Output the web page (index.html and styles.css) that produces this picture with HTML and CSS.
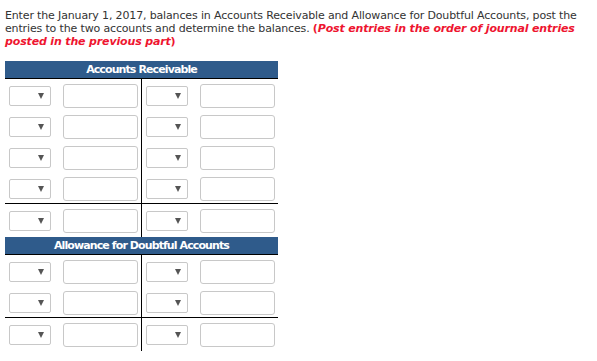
FILE: index.html
```html
<!DOCTYPE html>
<html>
<head>
<meta charset="utf-8">
<link rel="stylesheet" href="styles.css">
</head>
<body>
<p class="intro">Enter the January 1, 2017, balances in Accounts Receivable and Allowance for Doubtful Accounts, post the entries to the two accounts and determine the balances. <span class="note">(<em>Post entries in the order of journal entries posted in the previous part</em>)</span></p>

<div class="taccount">
  <div class="t-head">Accounts Receivable</div>
  <div class="t-row"><div class="cell left"><div class="sel"><span class="caret"></span></div><input class="amt" type="text"></div><div class="cell right"><div class="sel"><span class="caret"></span></div><input class="amt" type="text"></div></div>
  <div class="t-row"><div class="cell left"><div class="sel"><span class="caret"></span></div><input class="amt" type="text"></div><div class="cell right"><div class="sel"><span class="caret"></span></div><input class="amt" type="text"></div></div>
  <div class="t-row"><div class="cell left"><div class="sel"><span class="caret"></span></div><input class="amt" type="text"></div><div class="cell right"><div class="sel"><span class="caret"></span></div><input class="amt" type="text"></div></div>
  <div class="t-row"><div class="cell left"><div class="sel"><span class="caret"></span></div><input class="amt" type="text"></div><div class="cell right"><div class="sel"><span class="caret"></span></div><input class="amt" type="text"></div></div>
  <div class="t-row total"><div class="cell left"><div class="sel"><span class="caret"></span></div><input class="amt" type="text"></div><div class="cell right"><div class="sel"><span class="caret"></span></div><input class="amt" type="text"></div></div>
</div>

<div class="taccount">
  <div class="t-head">Allowance for Doubtful Accounts</div>
  <div class="t-row"><div class="cell left"><div class="sel"><span class="caret"></span></div><input class="amt" type="text"></div><div class="cell right"><div class="sel"><span class="caret"></span></div><input class="amt" type="text"></div></div>
  <div class="t-row"><div class="cell left"><div class="sel"><span class="caret"></span></div><input class="amt" type="text"></div><div class="cell right"><div class="sel"><span class="caret"></span></div><input class="amt" type="text"></div></div>
  <div class="t-row total"><div class="cell left"><div class="sel"><span class="caret"></span></div><input class="amt" type="text"></div><div class="cell right"><div class="sel"><span class="caret"></span></div><input class="amt" type="text"></div></div>
</div>
</body>
</html>
```
FILE: styles.css
```css
html, body {
  margin: 0;
  padding: 0;
  background: #fff;
}
body {
  padding: 9px 5px 0 5px;
  font-family: "DejaVu Sans", Verdana, sans-serif;
  font-size: 11px;
  color: #333;
}
.intro {
  margin: 0 0 13px 0;
  line-height: 13px;
  width: 588px;
  letter-spacing: -0.15px;
}
.note {
  color: #ee1530;
  font-weight: bold;
}
.note em {
  font-style: italic;
}
.taccount {
  width: 273px;
}
.t-head {
  height: 17px;
  line-height: 17px;
  background: #2f5b8b;
  color: #fff;
  font-weight: bold;
  text-align: center;
  letter-spacing: -0.9px;
  border-bottom: 1px solid #000;
}
.t-row {
  display: flex;
  height: 31px;
}
.t-row.total {
  border-top: 1px solid #000;
  height: 33px;
}
.cell {
  display: flex;
  align-items: flex-start;
  box-sizing: border-box;
  padding-top: 5px;
}
.cell.left {
  width: 137px;
  border-right: 1px solid #000;
  padding-left: 4px;
}
.cell.right {
  width: 136px;
  padding-left: 4px;
}
.sel {
  box-sizing: border-box;
  width: 42px;
  height: 20px;
  margin-top: 2px;
  border: 1px solid #c8c8c8;
  border-radius: 2px;
  background: #fff;
  display: flex;
  align-items: center;
  justify-content: flex-end;
  padding-right: 6px;
}
.caret {
  width: 0;
  height: 0;
  border-left: 3px solid transparent;
  border-right: 3px solid transparent;
  border-top: 6px solid #555;
}
.amt {
  box-sizing: border-box;
  width: 75px;
  height: 24px;
  margin: 0 0 0 12px;
  padding: 0;
  border: 1px solid #c8c8c8;
  border-radius: 3px;
  background: #fff;
}
```
